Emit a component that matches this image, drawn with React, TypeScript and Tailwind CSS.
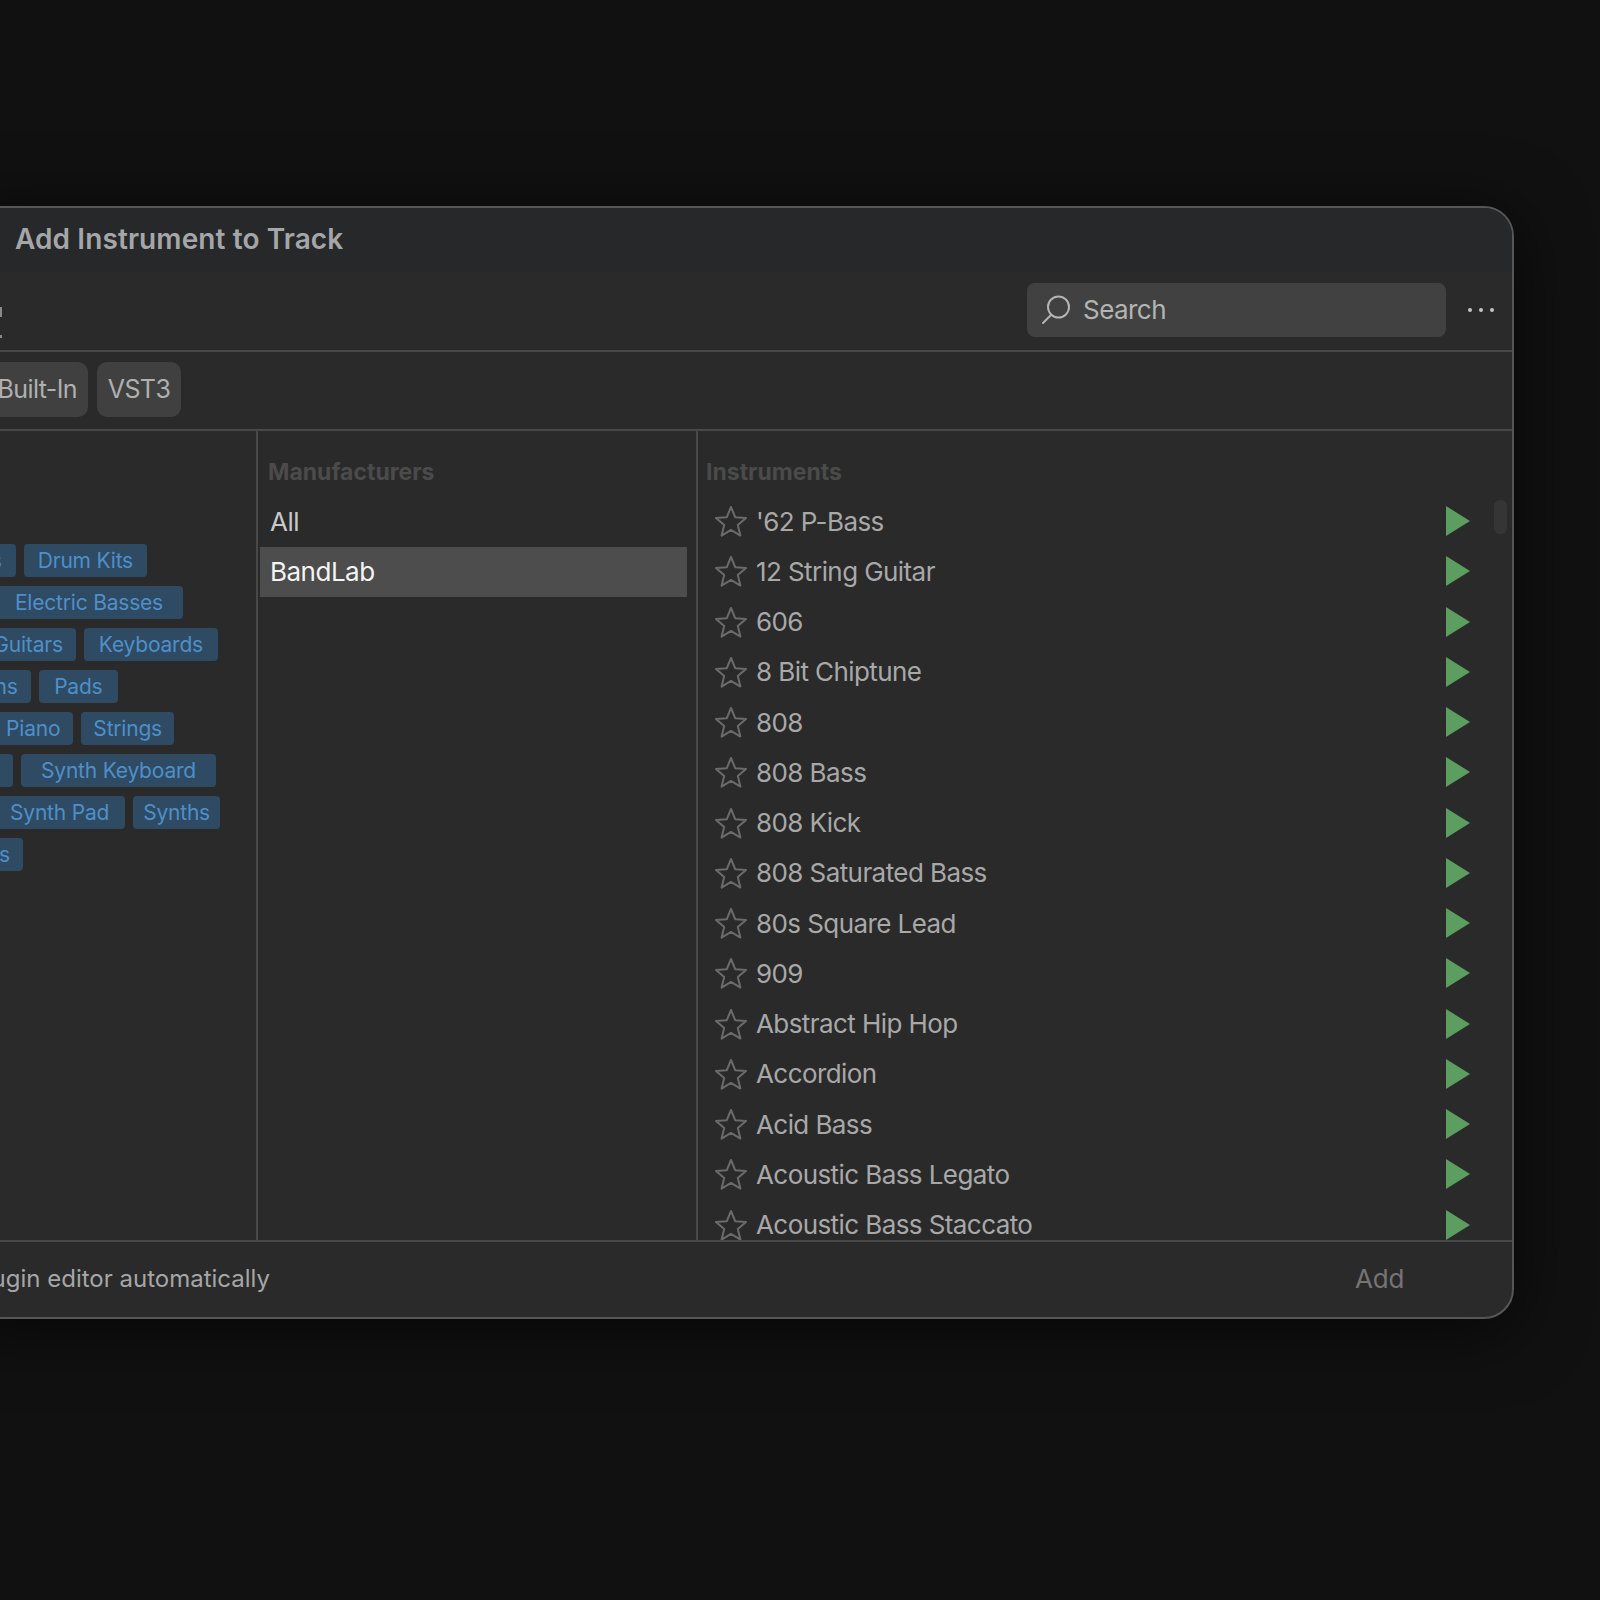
const instruments = [
  "'62 P-Bass",
  "12 String Guitar",
  "606",
  "8 Bit Chiptune",
  "808",
  "808 Bass",
  "808 Kick",
  "808 Saturated Bass",
  "80s Square Lead",
  "909",
  "Abstract Hip Hop",
  "Accordion",
  "Acid Bass",
  "Acoustic Bass Legato",
  "Acoustic Bass Staccato",
];

const tagRows = [
  { cls: "pr-[109px]", tags: [{ t: "Brass", px: "px-[14px]" }, { t: "Drum Kits", px: "px-[14px]" }] },
  { cls: "pr-[73px]", tags: [{ t: "Drums", px: "px-[14px]" }, { t: "Electric Basses", px: "px-[20px]" }] },
  { cls: "pr-[38px]", tags: [{ t: "Guitars", px: "px-[13px]" }, { t: "Keyboards", px: "px-[15px]" }] },
  { cls: "pr-[138px]", tags: [{ t: "Organs", px: "px-[13px]" }, { t: "Pads", px: "px-[15.5px]" }] },
  { cls: "pr-[82px]", tags: [{ t: "Piano", px: "px-[13px]" }, { t: "Strings", px: "px-[12px]" }] },
  { cls: "pr-[40px]", tags: [{ t: "Synth Bass", px: "px-[19px]" }, { t: "Synth Keyboard", px: "px-[20px]" }] },
  { cls: "pr-[36px]", tags: [{ t: "Synth Pad", px: "px-[16px]" }, { t: "Synths", px: "px-[10px]" }] },
  { cls: "pr-[233px]", tags: [{ t: "Winds", px: "px-[13px]" }] },
];

function Star() {
  return (
    <svg width="34" height="32" viewBox="0 0 34 32" fill="none" className="shrink-0">
      <path
        d="M17 2 L21.2 12.2 L32 13 L23.8 20 L26.4 30.6 L17 24.9 L7.6 30.6 L10.2 20 L2 13 L12.8 12.2 Z"
        stroke="#6b6b6b"
        strokeWidth="2"
        strokeLinejoin="round"
      />
    </svg>
  );
}

function Play() {
  return (
    <svg width="24" height="30" viewBox="0 0 24 30" className="shrink-0">
      <path d="M0 0 L24 15 L0 30 Z" fill="#5b9e5f" />
    </svg>
  );
}

export default function App() {
  return (
    <div className="h-[1600px] overflow-hidden bg-[#111112] pt-[206px] font-['Inter',sans-serif]">
      <div className="-ml-[40px] flex h-[1113px] w-[1554px] flex-col overflow-hidden rounded-[30px] border-2 border-[#565656] bg-[#2a2a2a] shadow-[0_10px_70px_rgba(0,0,0,0.65)]">
        {/* Title bar */}
        <div className="flex h-[64px] shrink-0 items-center bg-[#27282a] pb-[2px] pl-[53px] text-[28px] font-semibold tracking-[0.1px] text-[#a4a6a8]">
          Add Instrument to Track
        </div>

        {/* Search row */}
        <div className="flex h-[80px] shrink-0 items-start border-b-2 border-[#484848] pt-[11px] tracking-[-0.55px]">
          {/* edge of a control that is cut off by the left side of the shot */}
          <svg width="40" height="32" viewBox="0 0 40 32" className="mt-[24px] shrink-0">
            <rect x="38" y="0" width="2" height="10" fill="#8a8a8a" />
            <rect x="38" y="28" width="2" height="3" fill="#8a8a8a" />
          </svg>
          <div className="ml-[1025px] flex h-[54px] w-[419px] items-center gap-[12px] rounded-lg bg-[#414141] pl-[14px] text-[26px] text-[#b4b4b4]">
            <svg width="30" height="30" viewBox="0 0 30 30" fill="none" stroke="#b4b4b4" strokeWidth="2" strokeLinecap="round">
              <circle cx="17.5" cy="12" r="10.5" />
              <path d="M10 20 L2 28" />
            </svg>
            <span className="-mt-[2px]">Search</span>
          </div>
          <div className="ml-[22px] mt-[25px] flex gap-[7px]">
            <div className="h-[4px] w-[4px] rounded-full bg-[#c4c4c4]" />
            <div className="h-[4px] w-[4px] rounded-full bg-[#c4c4c4]" />
            <div className="h-[4px] w-[4px] rounded-full bg-[#c4c4c4]" />
          </div>
        </div>

        {/* Format filters */}
        <div className="flex h-[79px] shrink-0 items-center border-b-2 border-[#484848] pb-[2px]">
          <div className="flex w-[219px] justify-end gap-[9px] text-[25px] tracking-[-0.6px] text-[#b0b0b0]">
            <div className="flex h-[55px] items-center rounded-[10px] bg-[#404040] px-[11px]">Built-In</div>
            <div className="flex h-[55px] w-[84px] items-center justify-center rounded-[10px] bg-[#404040]">VST3</div>
          </div>
        </div>

        {/* Columns */}
        <div className="flex min-h-0 flex-1">
          <div className="flex w-[296px] shrink-0 flex-col gap-[9px] overflow-hidden border-r-2 border-[#484848] pt-[113px]">
            {tagRows.map((row) => (
              <div key={row.tags[0].t} className={`flex justify-end gap-[8px] ${row.cls}`}>
                {row.tags.map((tag) => (
                  <div
                    key={tag.t}
                    className={`flex h-[33px] shrink-0 items-center whitespace-nowrap rounded-[4px] bg-[#2e4b63] text-[21px] tracking-[-0.2px] text-[#4f8fc9] ${tag.px}`}
                  >
                    {tag.t}
                  </div>
                ))}
              </div>
            ))}
          </div>

          <div className="flex w-[440px] shrink-0 flex-col border-r-2 border-[#484848] pl-[2px] pr-[9px] pt-[30px] text-[26px] tracking-[-0.5px]">
            <div className="h-[35.5px] pl-[8px] text-[23px] leading-[23px] font-bold tracking-normal text-[#4b4b4b]">Manufacturers</div>
            <div className="flex h-[50px] items-center pl-[10px] text-[#c8c8c8]">All</div>
            <div className="flex h-[50px] items-center bg-[#4d4d4d] pl-[10px] text-[#f4f4f4]">BandLab</div>
          </div>

          <div className="relative min-w-0 flex-1 overflow-hidden pl-[8px] pt-[30px]">
            <div className="h-[35px] text-[23px] leading-[23px] font-bold text-[#4b4b4b]">Instruments</div>
            {instruments.map((name) => (
              <div key={name} className="flex h-[50.25px] items-center pl-[8px] pr-[42px] text-[26px] tracking-[-0.58px] text-[#a8a8a8]">
                <Star />
                <span className="ml-[8px] flex-1 whitespace-nowrap">{name}</span>
                <Play />
              </div>
            ))}
            <div className="absolute right-[5px] top-[69px] h-[34px] w-[13px] rounded-md bg-[#353535]" />
          </div>
        </div>

        {/* Footer */}
        <div className="flex h-[77px] shrink-0 items-center border-t-2 border-[#484848] pb-[2px] text-[24px]">
          <div className="flex w-[308px] shrink-0 justify-end whitespace-nowrap text-[#a6a6a6]">Open plugin editor automatically</div>
          <div className="ml-[1085px] text-[26px] tracking-[-0.2px] text-[#757575]">Add</div>
        </div>
      </div>
    </div>
  );
}
